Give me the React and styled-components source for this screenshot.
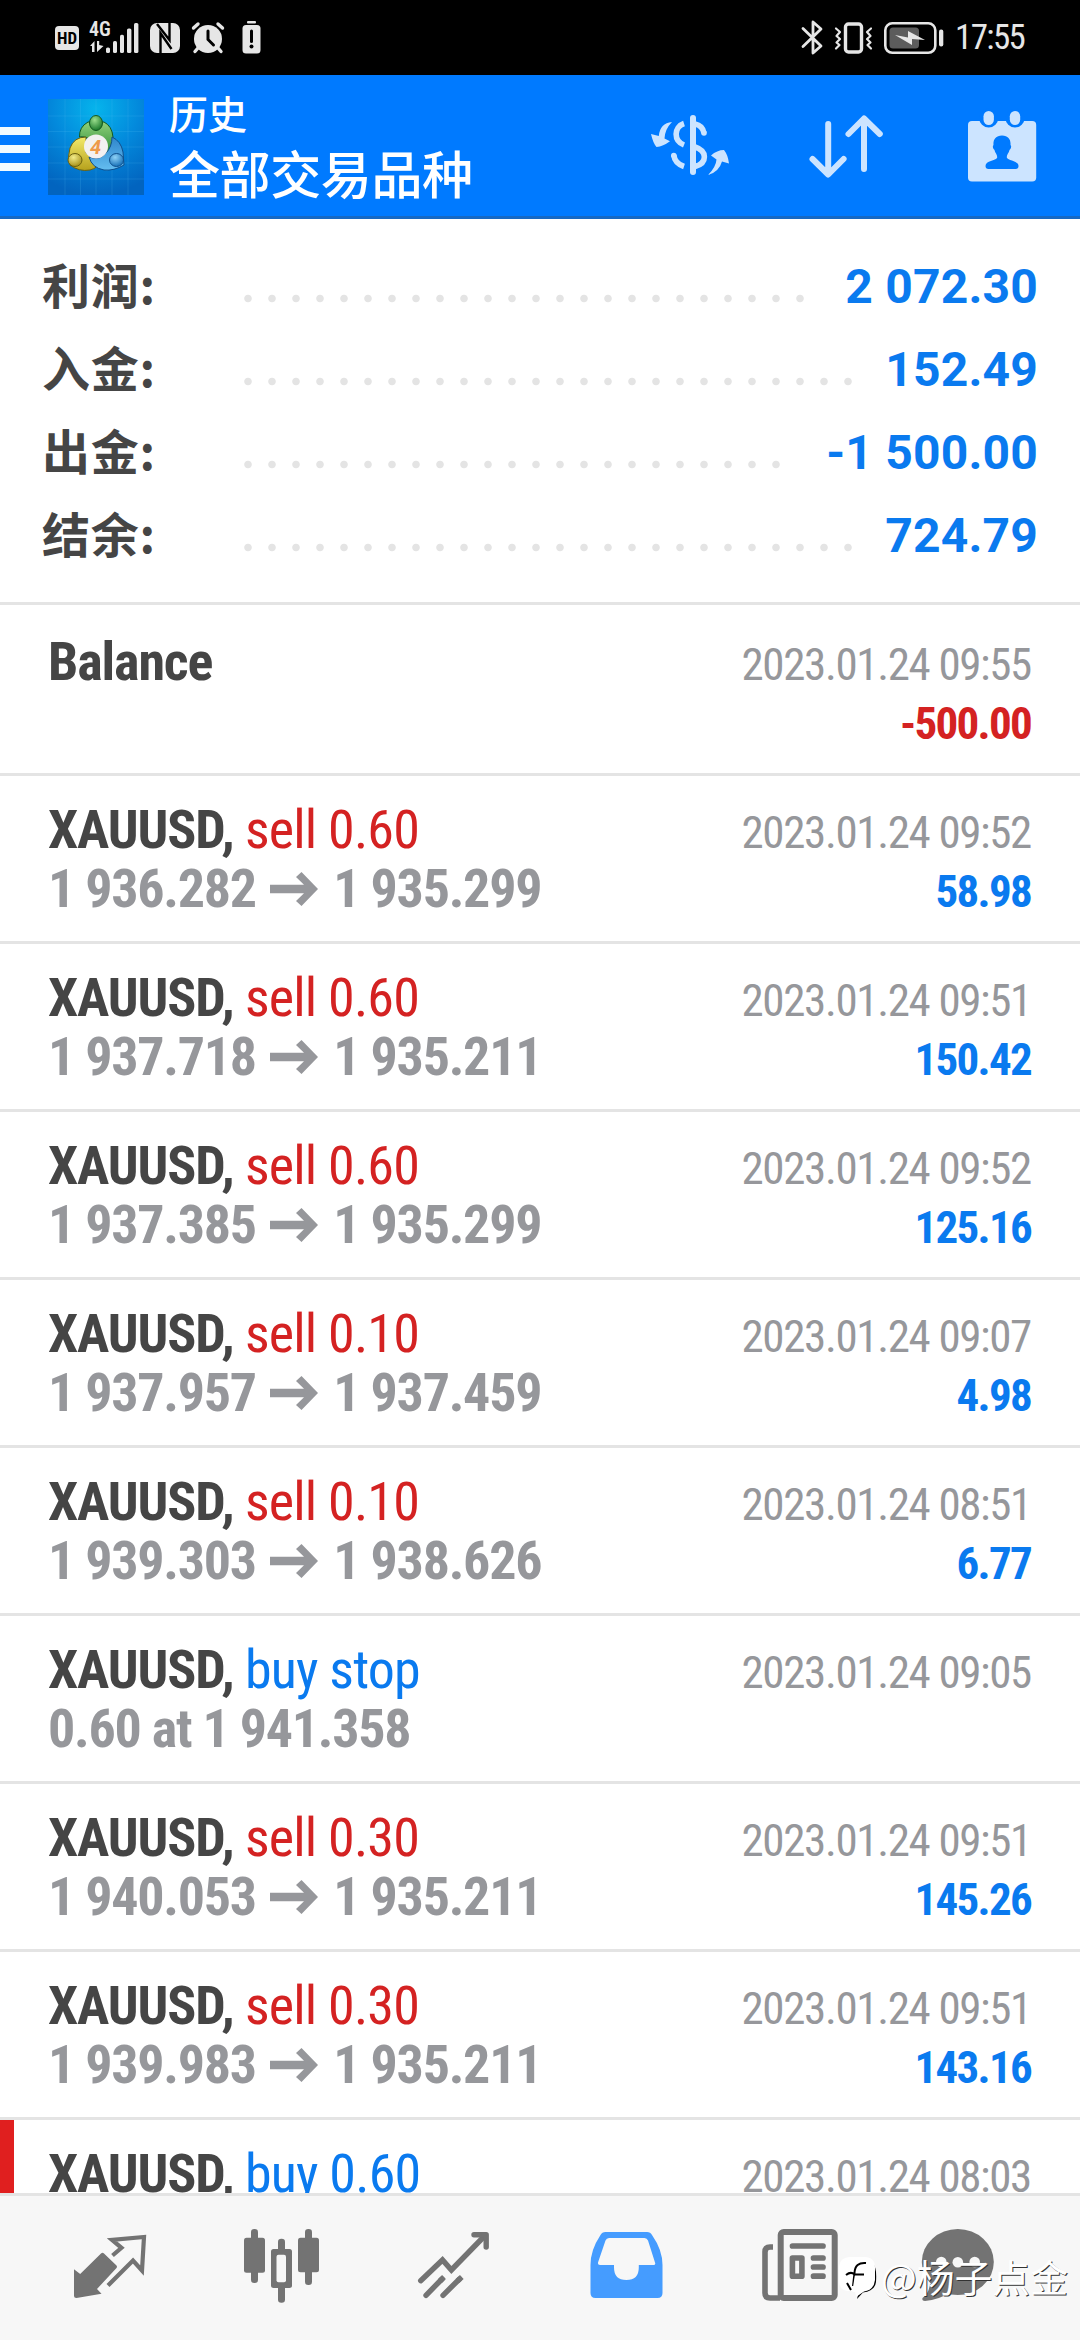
import React from "react";
import styled, { createGlobalStyle, css } from "styled-components";

const col_blue = "#0a7aef";
const col_red = "#d42222";
const col_text = "#454545";
const col_muted = "#96979b";
const col_line = "#e4e4e4";
const col_nav = "#737373";
const col_action = "#cce4ff";
const col_status = "#e6e6e6";

const totals = [
  { label: "利润:", value: "2 072.30", dots: 24 },
  { label: "入金:", value: "152.49", dots: 26 },
  { label: "出金:", value: "-1 500.00", dots: 23 },
  { label: "结余:", value: "724.79", dots: 26 },
];

const deals = [
  { type: "sell", volume: "0.60", from: "1 936.282", to: "1 935.299", time: "2023.01.24 09:52", profit: "58.98" },
  { type: "sell", volume: "0.60", from: "1 937.718", to: "1 935.211", time: "2023.01.24 09:51", profit: "150.42" },
  { type: "sell", volume: "0.60", from: "1 937.385", to: "1 935.299", time: "2023.01.24 09:52", profit: "125.16" },
  { type: "sell", volume: "0.10", from: "1 937.957", to: "1 937.459", time: "2023.01.24 09:07", profit: "4.98" },
  { type: "sell", volume: "0.10", from: "1 939.303", to: "1 938.626", time: "2023.01.24 08:51", profit: "6.77" },
  { type: "buy", volume: "stop", order: "0.60 at 1 941.358", time: "2023.01.24 09:05" },
  { type: "sell", volume: "0.30", from: "1 940.053", to: "1 935.211", time: "2023.01.24 09:51", profit: "145.26" },
  { type: "sell", volume: "0.30", from: "1 939.983", to: "1 935.211", time: "2023.01.24 09:51", profit: "143.16" },
  { type: "buy", volume: "0.60", time: "2023.01.24 08:03", marked: true },
];

const Signal = () => (
  <Glyph width="50" height="34" viewBox="0 0 50 34" fill={col_status}>
    <path d="M1 25 L5.5 20 V31 H3 V25Z M8 20 H10.2 V24 L14.5 25 L8 31Z" />
    <rect x="17" y="26.5" width="4" height="5.5" rx="1.6" />
    <rect x="24" y="20" width="4" height="12" rx="1.6" />
    <rect x="31" y="13.7" width="4" height="18.3" rx="1.6" />
    <rect x="38" y="7.5" width="4.4" height="24.5" rx="1.6" />
    <rect x="45" y="2" width="4.4" height="30" rx="1.6" />
  </Glyph>
);

const Nfc = () => (
  <Glyph width="30" height="30" viewBox="0 0 30 30">
    <rect width="30" height="30" rx="7" fill={col_status} />
    <path d="M10.5 30 V10 L21.5 26 M7 1 L19.5 17 V0" fill="none" stroke="#000" strokeWidth="2.4" />
  </Glyph>
);

const Alarm = () => (
  <Glyph width="34" height="31" viewBox="0 0 34 31">
    <circle cx="17" cy="17" r="14" fill={col_status} />
    <g stroke={col_status} strokeWidth="3.4" strokeLinecap="round">
      <path d="M2.5 6 L7 2M31.5 6 L27 2M7 26 L4 29.5M27 26 L30 29.5" />
    </g>
    <path d="M17 9 V17.5 L22.5 23" fill="none" stroke="#000" strokeWidth="3" strokeLinecap="round" />
  </Glyph>
);

const LowBattery = () => (
  <Glyph width="19" height="33" viewBox="0 0 19 33">
    <rect x="5" y="0" width="9" height="2.4" rx="1" fill={col_status} />
    <rect x="0.5" y="4" width="18" height="28.5" rx="3.5" fill={col_status} />
    <path d="M9.5 10 V20.5" stroke="#000" strokeWidth="3" strokeLinecap="round" />
    <circle cx="9.5" cy="25.5" r="2" />
  </Glyph>
);

const Bluetooth = () => (
  <Glyph
    width="22"
    height="35"
    viewBox="0 0 22 35"
    fill="none"
    stroke={col_status}
    strokeWidth="2.8"
    strokeLinejoin="round"
    strokeLinecap="round"
  >
    <path d="M2 8.5 L20 26 L12 33 V2 L20 9 L2 26.5" />
  </Glyph>
);

const Vibrate = () => (
  <Glyph width="39" height="32" viewBox="0 0 39 32" fill="none" stroke={col_status} strokeLinejoin="round" strokeLinecap="round">
    <rect x="11.5" y="2" width="16" height="28" rx="3" strokeWidth="3.4" />
    <path
      d="M2 6.5 L6 10 L2.5 14 L6 17 L2.5 20.5 L5.5 23 L2 26.5M37 6.5 L33 10 L36.5 14 L33 17 L36.5 20.5 L33.5 23 L37 26.5"
      strokeWidth="2.2"
    />
  </Glyph>
);

const Charging = () => (
  <Glyph width="60" height="32" viewBox="0 0 60 32">
    <rect x="1.3" y="1.3" width="50" height="29.5" rx="7" fill="none" stroke={col_status} strokeWidth="2.6" />
    <rect x="5.5" y="5.5" width="29.5" height="21" rx="3.5" fill="#5c5c5c" />
    <path d="M11 13 L24 15.5 V9 L41 18 L28 17 V23Z" fill={col_status} />
    <rect x="55" y="7.5" width="4.3" height="17" rx="2" fill={col_status} />
  </Glyph>
);

const Menu = () => (
  <Glyph width="30" height="44" viewBox="0 0 30 44" fill="#f2fbff">
    <path d="M0 0H30V8H0ZM0 18H30V26H0ZM0 36H30V44H0Z" />
  </Glyph>
);

const Logo = () => (
  <Glyph width="96" height="96" viewBox="0 0 96 96">
    <defs>
      <radialGradient id="bg" cx="0.5" cy="0.1" r="0.9">
        <stop offset="0" stopColor="#06b4ec" />
        <stop offset="0.5" stopColor="#0389dc" />
        <stop offset="1" stopColor="#0264bf" />
      </radialGradient>
      <linearGradient id="green" x1="0" y1="0" x2="0" y2="1">
        <stop offset="0" stopColor="#8fd07a" />
        <stop offset="1" stopColor="#2a8a35" />
      </linearGradient>
      <linearGradient id="yellow" x1="0" y1="0" x2="0" y2="1">
        <stop offset="0" stopColor="#f3ea6c" />
        <stop offset="1" stopColor="#b6a11c" />
      </linearGradient>
      <linearGradient id="sky" x1="0" y1="0" x2="0" y2="1">
        <stop offset="0" stopColor="#2f86cc" />
        <stop offset="1" stopColor="#64bdf0" />
      </linearGradient>
      <radialGradient id="headG" cx="0.4" cy="0.3" r="0.7">
        <stop offset="0" stopColor="#9ade8c" />
        <stop offset="1" stopColor="#1c7a2c" />
      </radialGradient>
      <radialGradient id="headY" cx="0.4" cy="0.3" r="0.7">
        <stop offset="0" stopColor="#f2ec8a" />
        <stop offset="1" stopColor="#a8921a" />
      </radialGradient>
      <radialGradient id="headB" cx="0.4" cy="0.3" r="0.7">
        <stop offset="0" stopColor="#8fd2f7" />
        <stop offset="1" stopColor="#1871b8" />
      </radialGradient>
    </defs>
    <rect width="96" height="96" fill="url(#bg)" />
    <path
      d="M17 0V96M32.5 0V96M48 0V96M64 0V96M80 0V96M0 17H96M0 32.5H96M0 48H96M0 64H96M0 80H96"
      stroke="#5ac4f5"
      strokeOpacity="0.18"
    />
    <g strokeWidth="1">
      <path d="M40 23 Q31 28 31.5 38 Q38 37 42 41 L56 56 Q65 50 65 38 Q64 27 56 23Z" fill="url(#green)" stroke="#14591f" />
      <path d="M38 38 Q26 38 22 49 Q19 58 22 66 Q31 73 42 71 Q50 69 53 62 L38 54Z" fill="url(#yellow)" stroke="#6b610f" />
      <path d="M64 38 Q73 42 75 53 L76 66 Q66 72 56 71 Q44 69 41 58 Q52 62 58 54 Q64 48 64 38Z" fill="url(#sky)" stroke="#0f4f8c" />
      <ellipse cx="48" cy="24" rx="6.5" ry="7.5" fill="url(#headG)" stroke="#14591f" />
      <ellipse cx="27" cy="61" rx="7" ry="6.5" fill="url(#headY)" stroke="#6b610f" />
      <ellipse cx="68.5" cy="61" rx="7" ry="6.5" fill="url(#headB)" stroke="#0f4f8c" />
    </g>
    <circle cx="48" cy="47.5" r="12" fill="#f3f1f1" />
    <text x="47.5" y="54.5" textAnchor="middle" fontFamily="Roboto" fontWeight="700" fontStyle="italic" fontSize="20" fill="#ee9a4a">
      4
    </text>
  </Glyph>
);

const CurrencyIcon = () => (
  <Glyph width="96" height="96" viewBox="0 0 96 96" fill={col_action}>
    <rect x="48" y="17" width="6" height="60" rx="3" />
    <path
      d="M42 25.5 C31.5 29 31.5 43 42 47M31.8 57 C32.5 63 36 66.5 42 68.5M53 26 C58 27 61 30 62 35M53 49 C65.5 53 65.5 65 53 68.5"
      fill="none"
      stroke={col_action}
      strokeWidth="5.6"
    />
    <circle cx="31.8" cy="57.5" r="2.8" />
    <circle cx="62" cy="35" r="2.8" />
    <path d="M30 24 Q18 25 16.8 38 L9 36 Q11 45 14.5 49 Q21 48.5 28 43.3 L22.5 40.5 Q23 31 30 24Z" />
    <path d="M66 77 Q74 69 74.5 61.5 L69 57.5 Q75 52 82 52 Q86 57 87 65.5 L80 63.5 Q77 74 66 77Z" />
  </Glyph>
);

const SortIcon = () => (
  <Glyph
    width="96"
    height="96"
    viewBox="0 0 96 96"
    fill="none"
    stroke={col_action}
    strokeWidth="6"
    strokeLinecap="round"
    strokeLinejoin="round"
  >
    <path d="M30.2 26 V76M14.5 61 L30.2 76.5 L45.6 61" />
    <path d="M66 71 V21M50.5 36 L66 20.5 L81.8 36" />
  </Glyph>
);

const CalendarIcon = () => (
  <Glyph width="96" height="96" viewBox="0 0 96 96">
    <rect x="14" y="23" width="68.2" height="60.5" rx="4" fill={col_action} />
    <g fill="#007aff">
      <ellipse cx="34.7" cy="20" rx="9.5" ry="9.5" />
      <ellipse cx="61" cy="20" rx="9.5" ry="9.5" />
      <path d="M48 37.5 C41.5 37.5 39 42 39.5 47 C38.2 48 39 51 40.5 52 C41 55 43.5 56.5 43.2 59.5 C42 63 31.5 62.5 31.5 68 Q31.5 71 34.5 71 H61.5 Q64.5 71 64.5 68 C64.5 62.5 54 63 52.8 59.5 C52.5 56.5 55 55 55.5 52 C57 51 57.8 48 56.5 47 C57 42 54.5 37.5 48 37.5Z" />
    </g>
    <rect x="29.5" y="13" width="10.4" height="14" rx="5.2" fill={col_action} />
    <rect x="55.8" y="13" width="10.4" height="14" rx="5.2" fill={col_action} />
  </Glyph>
);

const QuotesIcon = () => (
  <Glyph width="96" height="96" viewBox="0 0 96 96">
    <path
      d="M12 49.3 L18.2 54 L39 33.5 Q40.5 32 42 33.5 L54.5 45.5 Q55.5 46.8 54.5 48 L35 69 L39.5 73.7 L14.5 78 Q12 78 12 75.5Z"
      fill={col_nav}
    />
    <path d="M50.5 35.5 L59.5 27.8 L50 19.8 L82 17 L80 50.5 L71 40.5 L46 65.5" fill="none" stroke={col_nav} strokeWidth="4.2" />
  </Glyph>
);

const ChartIcon = () => (
  <Glyph width="96" height="96" viewBox="0 0 96 96" fill={col_nav}>
    <rect x="17" y="9" width="7" height="54" rx="3.3" />
    <rect x="10" y="17.7" width="21" height="35" rx="2.5" />
    <rect x="44" y="18.7" width="7" height="64" rx="3.3" />
    <rect x="37" y="29" width="21" height="39" rx="2.5" />
    <rect x="42.5" y="34.7" width="9.5" height="27.6" rx="2" fill="#f7f7f7" />
    <rect x="71" y="9" width="7" height="56" rx="3.3" />
    <rect x="64" y="17.7" width="21" height="34.5" rx="2.5" />
  </Glyph>
);

const TradeIcon = () => (
  <Glyph width="96" height="96" viewBox="0 0 96 96" fill="none" stroke={col_nav} strokeWidth="5.4" strokeLinecap="round">
    <path d="M14.7 60.7 L36.5 40 L45.4 50 L79 15.5" />
    <path d="M68 14.8 H80.2 V27" strokeLinejoin="round" />
    <path d="M20 75.3 L36 59M37 75.3 L53.5 59" />
    <path d="M34 61 L38 57M51.5 61 L55.8 57" strokeLinecap="butt" />
  </Glyph>
);

const HistoryIcon = () => (
  <Glyph width="96" height="96" viewBox="0 0 96 96" fill="#459cff">
    <path
      fillRule="evenodd"
      d="M27.5 12 H69 Q72.5 12 74 15 Q84.5 30 84.5 45 V73 Q84.5 78 79.5 78 H17.5 Q12.5 78 12.5 73 V45 Q12.5 30 22.5 15 Q24 12 27.5 12Z M31 18 Q28.5 18 27.5 20.5 L20 42.5 Q19.5 45 22 45 H36 V47.5 Q36 60 48.4 60 Q60.8 60 60.8 47.5 V45 H75.5 Q78 45 77 42.5 L70 20.5 Q69 18 66.5 18Z"
    />
  </Glyph>
);

const NewsIcon = () => (
  <Glyph width="96" height="96" viewBox="0 0 96 96" fill="none" stroke={col_nav}>
    <rect x="30.7" y="12" width="54" height="66" rx="3" strokeWidth="6" />
    <path d="M23 27 H20 Q15 27 15 32 V73 Q15 78 20 78 H30" strokeWidth="5.6" />
    <path d="M42.5 26 H73M63.5 38 H73M63.5 47 H73M63.5 56.2 H73" strokeWidth="5.7" strokeLinecap="round" />
    <rect x="42.4" y="38" width="9.5" height="18.3" strokeWidth="5.6" strokeLinejoin="round" />
  </Glyph>
);

const ChatIcon = () => (
  <Glyph width="96" height="96" viewBox="0 0 96 96" fill={col_nav}>
    <ellipse cx="35.8" cy="42" rx="36" ry="33" />
    <path d="M8 64 Q7 73 0.5 78 Q-0.5 81 3 81 Q17 80 28 72Z" />
    <g fill="#f7f7f7">
      <circle cx="19.3" cy="42" r="5.3" />
      <circle cx="35.8" cy="42.3" r="5.3" />
      <circle cx="52.7" cy="42" r="5.3" />
    </g>
  </Glyph>
);

const WatermarkLogo = () => (
  <Glyph width="40" height="46" viewBox="0 0 40 46">
    <path d="M34 8 Q38 11 37 26 Q36 35 24 36.5 L18 43 L20 35" fill="#000" />
    <path d="M10 1 H27 Q36 2 36 11 V24 Q35 34 25 35.5 L17 41 L16 35 H9 Q0 34 0 25 V10 Q1 2 10 1Z" fill="#fff" />
    <path d="M27 7 Q16 6 15.5 17 L14 30 M7 19 Q12 15 15.5 18.5 H25M8 27 L12 34" fill="none" stroke="#000" strokeWidth="2" />
    <path d="M17.5 20 L15 36" stroke="#fff" strokeWidth="3.5" />
  </Glyph>
);

const navItems = [QuotesIcon, ChartIcon, TradeIcon, HistoryIcon, NewsIcon, ChatIcon];

const Deal = ({ deal }) => (
  <Row $marked={deal.marked}>
    <Info>
      <Title>
        <b>XAUUSD,</b> <Side $type={deal.type}>{`${deal.type} ${deal.volume}`}</Side>
      </Title>
      {deal.order && <Price>{deal.order}</Price>}
      {deal.from && (
        <Price>
          {deal.from}{" "}
          <Arrow width="48" height="34" viewBox="0 0 48 34" fill={col_muted}>
            <path d="M0 12.7 H34 L26 5 L31.5 0 L48 17 L31.5 34 L26 29 L34 21.300 H0Z" />
          </Arrow>{" "}
          {deal.to}
        </Price>
      )}
    </Info>
    <Result>
      <Time>{deal.time}</Time>
      {deal.profit && <Profit>{deal.profit}</Profit>}
    </Result>
  </Row>
);

const App = () => {
  return (
    <Screen>
      <GlobalStyle />
      <StatusBar>
        <StatusGroup>
          <HdBadge>HD</HdBadge>
          <Network>
            <span>4G</span>
            <Signal />
          </Network>
          <Nfc />
          <Alarm />
          <LowBattery />
        </StatusGroup>
        <StatusRight>
          <Bluetooth />
          <Vibrate />
          <Charging />
          <Clock>17:55</Clock>
        </StatusRight>
      </StatusBar>
      <Header>
        <Menu />
        <Logo />
        <Heading>
          <Subtitle>历史</Subtitle>
          <PageTitle>全部交易品种</PageTitle>
        </Heading>
        <Actions>
          <CurrencyIcon />
          <SortIcon />
          <CalendarIcon />
        </Actions>
      </Header>
      <Summary>
        {totals.map((item) => (
          <Total key={item.label}>
            <Label>{item.label}</Label>
            <Dots $count={item.dots} />
            <Value>{item.value}</Value>
          </Total>
        ))}
      </Summary>
      <List>
        <Row $first>
          <Info>
            <Title>
              <b>Balance</b>
            </Title>
          </Info>
          <Result>
            <Time>2023.01.24 09:55</Time>
            <Profit $loss>-500.00</Profit>
          </Result>
        </Row>
        {deals.map((deal, i) => (
          <Deal key={i} deal={deal} />
        ))}
      </List>
      <BottomBar>
        {navItems.map((Icon, i) => (
          <NavItem key={i}>
            <Icon />
          </NavItem>
        ))}
        <Watermark>
          <WatermarkLogo />
          <span>@杨子点金</span>
        </Watermark>
      </BottomBar>
    </Screen>
  );
};

export default App;

const GlobalStyle = createGlobalStyle`
  body {
    margin: 0;
    background: #fff;
  }
  * {
    box-sizing: border-box;
  }
`;
const condensed = css`
  font-family: "Roboto Condensed", Roboto, sans-serif;
  font-stretch: 75%;
`;
const Glyph = styled.svg`
  display: block;
  flex: none;
  overflow: visible;
`;
const Screen = styled.div`
  display: flex;
  flex-direction: column;
  width: 1080px;
  height: 2340px;
  overflow: hidden;
  background: #fff;
  font-family: Roboto, "Noto Sans CJK SC", sans-serif;
`;
const StatusBar = styled.div`
  display: flex;
  flex: none;
  justify-content: space-between;
  height: 75px;
  padding: 0 56px 0 55px;
  background: #000;
  color: ${col_status};
`;
const StatusGroup = styled.div`
  display: flex;
  align-items: center;
  & > svg:nth-of-type(1) {
    margin-left: 11px;
  }
  & > svg:nth-of-type(2) {
    margin-left: 11px;
  }
  & > svg:nth-of-type(3) {
    margin-left: 17px;
  }
`;
const HdBadge = styled.div`
  width: 24px;
  height: 24px;
  border-radius: 4px;
  background: ${col_status};
  color: #000;
  font-size: 17px;
  font-weight: 700;
  line-height: 25px;
  text-align: center;
  ${condensed}
`;
const Network = styled.div`
  position: relative;
  margin-left: 10px;
  span {
    position: absolute;
    top: -2px;
    left: 0;
    font-size: 20px;
    font-weight: 600;
    line-height: 20px;
    ${condensed}
  }
`;
const StatusRight = styled.div`
  display: flex;
  align-items: center;
  gap: 11px;
`;
const Clock = styled.div`
  width: 69px;
  font-size: 35px;
  line-height: 40px;
  letter-spacing: -1.6px;
  white-space: nowrap;
  ${condensed}
`;
const Header = styled.header`
  display: flex;
  flex: none;
  height: 144px;
  padding-top: 24px;
  border-bottom: 3px solid #1669c4;
  background: #007aff;
  color: #fff;
  & > svg:first-child {
    margin: 28px 18px 0 0;
  }
`;
const Heading = styled.div`
  flex: 1;
  margin-left: 25px;
  font-weight: 500;
`;
const Subtitle = styled.div`
  margin-top: -8px;
  font-size: 39px;
  line-height: 50px;
`;
const PageTitle = styled.div`
  font-size: 51px;
  line-height: 72px;
  letter-spacing: -0.4px;
`;
const Actions = styled.div`
  display: flex;
  gap: 60px;
  margin: -1px 30px 0 0;
`;
const Summary = styled.section`
  flex: none;
  height: 386px;
  padding: 26px 42px 0 42px;
  border-bottom: 3px solid ${col_line};
`;
const Total = styled.div`
  display: flex;
  height: 83px;
  line-height: 83px;
`;
const Label = styled.div`
  width: 194px;
  color: ${col_text};
  font-family: "Noto Sans CJK SC", sans-serif;
  font-size: 48px;
  font-weight: 700;
  line-height: 77px;
  letter-spacing: 0.7px;
`;
const Dots = styled.div`
  width: ${({ $count }) => $count * 24}px;
  background: radial-gradient(circle at 12px 53.5px, #e4e4e4 3.3px, transparent 4.2px);
  background-size: 24px 83px;
`;
const Value = styled.div`
  flex: 1;
  color: ${col_blue};
  font-size: 48px;
  font-weight: 700;
  letter-spacing: 0.2px;
  text-align: right;
  white-space: nowrap;
`;
const List = styled.section`
  flex: 1;
  min-height: 0;
  overflow: hidden;
`;
const Row = styled.div`
  display: flex;
  justify-content: space-between;
  height: ${({ $first }) => ($first ? 171 : 168)}px;
  padding: ${({ $first }) => ($first ? 27 : 24)}px 49px 0 48px;
  border-bottom: 3px solid ${col_line};
  box-shadow: ${({ $marked }) => ($marked ? "inset 14px 0 0 #e01f1f" : "none")};
  line-height: 59px;
  white-space: nowrap;
  ${condensed}
`;
const Info = styled.div`
  font-size: 54px;
`;
const Title = styled.div`
  color: ${col_text};
  letter-spacing: -1.1px;
`;
const Side = styled.span`
  color: ${({ $type }) => ($type === "sell" ? col_red : col_blue)};
  letter-spacing: -0.8px;
`;
const Price = styled.div`
  color: ${col_muted};
  font-weight: 700;
  letter-spacing: -1.25px;
`;
const Arrow = styled.svg`
  margin: 0 4px 1px 3px;
  vertical-align: baseline;
`;
const Result = styled.div`
  padding-top: 3px;
  font-size: 45px;
  text-align: right;
`;
const Time = styled.div`
  color: ${col_muted};
  letter-spacing: -1.35px;
`;
const Profit = styled.div`
  color: ${({ $loss }) => ($loss ? col_red : col_blue)};
  font-weight: 700;
  letter-spacing: -1.7px;
`;
const BottomBar = styled.nav`
  position: relative;
  display: flex;
  flex: none;
  height: 147px;
  padding: 0 24px;
  border-top: 3px solid ${col_line};
  background: #f7f7f7;
`;
const NavItem = styled.div`
  display: flex;
  flex: 1;
  align-items: center;
  justify-content: center;
`;
const Watermark = styled.div`
  position: absolute;
  top: 60px;
  left: 839px;
  display: flex;
  gap: 2px;
  color: #fff;
  font-family: "Noto Sans CJK SC", sans-serif;
  font-size: 37.8px;
  line-height: 39px;
  white-space: nowrap;
  text-shadow: 1px 1px 0 #333;
`;
